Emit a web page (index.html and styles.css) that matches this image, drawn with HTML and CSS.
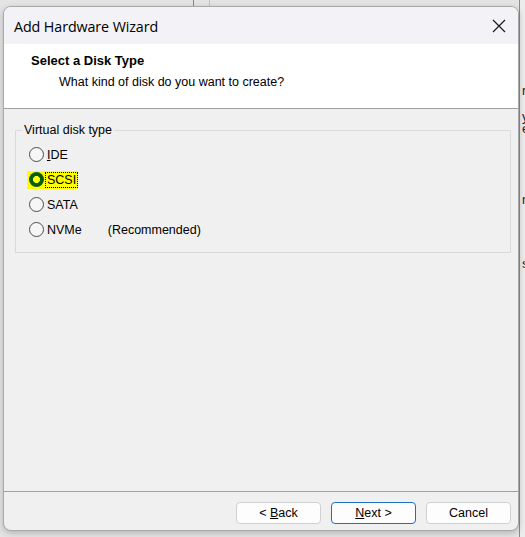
FILE: index.html
```html
<!DOCTYPE html>
<html>
<head>
<meta charset="utf-8">
<link rel="stylesheet" href="styles.css">
</head>
<body>
<div class="desktop">
  <div class="behind">
    <div class="behind-line l1">r</div>
    <div class="behind-line l2">y</div>
    <div class="behind-line l3">e</div>
    <div class="behind-line l4">n</div>
    <div class="behind-line l5">s</div>
  </div>
  <div class="behind-top"></div>
  <div class="window">
    <div class="titlebar">
      <span class="title">Add Hardware Wizard</span>
      <svg class="close" width="14" height="14" viewBox="0 0 14 14"><path d="M1 1L13 13M13 1L1 13" stroke="#1a1a1a" stroke-width="1.2" fill="none"/></svg>
    </div>
    <div class="header">
      <div class="h-title">Select a Disk Type</div>
      <div class="h-sub">What kind of disk do you want to create?</div>
    </div>
    <div class="content">
      <fieldset class="group">
        <legend class="legend">Virtual disk type</legend>
        <div class="row"><span class="radio"></span><span class="label"><u>I</u>DE</span></div>
        <div class="row sel"><span class="hl"><span class="radio on"></span><span class="label focus">SCSI</span></span></div>
        <div class="row"><span class="radio"></span><span class="label">SATA</span></div>
        <div class="row"><span class="radio"></span><span class="label">NVMe</span><span class="rec">(Recommended)</span></div>
      </fieldset>
    </div>
    <div class="footer">
      <button class="btn">&lt; <u>B</u>ack</button>
      <button class="btn primary"><u>N</u>ext &gt;</button>
      <button class="btn">Cancel</button>
    </div>
  </div>
</div>
</body>
</html>
```
FILE: styles.css
```css
html, body {
  margin: 0;
  padding: 0;
}
body {
  width: 525px;
  height: 537px;
  overflow: hidden;
  background: #e4e4e4;
  font-family: "Liberation Sans", Arial, sans-serif;
}
.desktop {
  position: relative;
  width: 525px;
  height: 537px;
  padding-top: 6px;
  padding-left: 3px;
  box-sizing: border-box;
}
.behind {
  position: absolute;
  left: 519px;
  top: 0;
  width: 20px;
  height: 537px;
  background: #ececec;
  border-left: 1px solid #8a8a8a;
  font-size: 13px;
  line-height: 9px;
  color: #1a1a3a;
}
.behind-line {
  position: absolute;
  left: 2px;
}
.l1 { top: 86px; }
.l2 { top: 112px; }
.l3 { top: 124px; }
.l4 { top: 195px; }
.l5 { top: 259px; }
.behind-top {
  position: absolute;
  left: 193px;
  top: 0;
  width: 15px;
  height: 6px;
  border-left: 1px solid #8a8a8a;
  border-right: 1px solid #c4c4c4;
}
.window {
  position: relative;
  width: 516px;
  height: 525px;
  box-sizing: border-box;
  border: 1px solid #a9a9a9;
  border-radius: 8px;
  overflow: hidden;
  background: #f0f0f0;
  box-shadow: 0 2px 6px rgba(0,0,0,0.22);
  display: flex;
  flex-direction: column;
}
.titlebar {
  height: 37px;
  background: #f2f2f7;
  display: flex;
  align-items: center;
  justify-content: space-between;
  padding: 0 12px 0 10px;
  flex: none;
}
.title {
  font-family: "Open Sans", "Noto Sans", sans-serif;
  font-size: 14.3px;
  color: #000;
  letter-spacing: -0.1px;
  margin-top: 1px;
}
.header {
  height: 65px;
  background: #fff;
  border-bottom: 1px solid #a0a0a0;
  padding: 9px 0 0 27px;
  box-sizing: border-box;
  flex: none;
}
.h-title {
  font-weight: bold;
  font-size: 13px;
  color: #000;
  line-height: 15px;
}
.h-sub {
  font-size: 12.5px;
  padding-left: 28px;
  margin-top: 6px;
  line-height: 16px;
  color: #000;
}
.content {
  flex: 1;
  padding: 14px 7px 0 11px;
  border-bottom: 1px solid #a0a0a0;
}
.group {
  margin: 0;
  border: 1px solid #dadada;
  padding: 5px 0 10px 13px;
}
.legend {
  font-size: 12.5px;
  padding: 0 2px;
  margin-left: -7px;
  color: #000;
}
.row {
  height: 25px;
  display: flex;
  align-items: center;
  font-size: 12.5px;
  color: #000;
}
.hl {
  display: flex;
  align-items: center;
  background: #ffff00;
  height: 18px;
  padding: 0 1px 0 2px;
  margin-left: -2px;
}
.radio {
  width: 13px;
  height: 13px;
  border: 1px solid #4d4d4d;
  border-radius: 50%;
  background: #f6f6f6;
  flex: none;
}
.radio.on {
  width: 15px;
  height: 15px;
  border: none;
  background: radial-gradient(circle, #ffff00 0 3.2px, #0a5c14 3.8px);
}
.label {
  margin-left: 3px;
}
.focus {
  outline: 1px dotted #000;
  outline-offset: 0px;
  padding: 0 1px;
  margin-left: 2px;
  line-height: 14px;
}
.rec {
  margin-left: 26px;
}
.footer {
  height: 38px;
  flex: none;
  display: flex;
  justify-content: flex-end;
  gap: 10px;
  padding: 10px 7px 0 0;
  box-sizing: border-box;
}
.btn {
  width: 85px;
  height: 22px;
  background: #fdfdfd;
  border: 1px solid #d0d0d0;
  border-radius: 4px;
  font-family: "Liberation Sans", Arial, sans-serif;
  font-size: 12.5px;
  color: #000;
  padding: 0;
}
.btn.primary {
  border-color: #1b6fc4;
}
```
